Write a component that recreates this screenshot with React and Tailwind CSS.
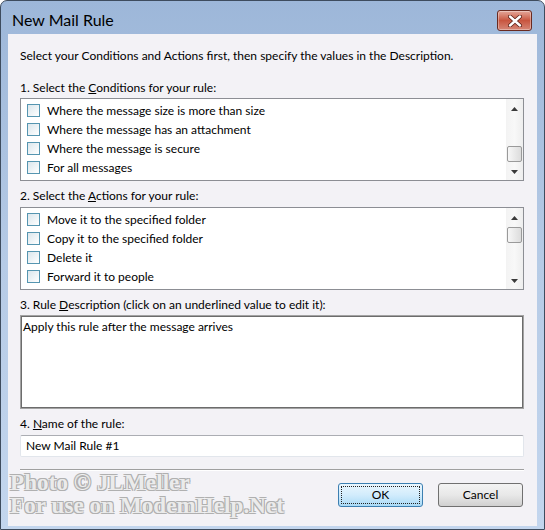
import React from "react";

function Check() {
  return (
    <span className="w-[13px] h-[13px] shrink-0 border border-[#5595b0] bg-linear-to-br from-[#dbe6ec] to-white" />
  );
}

function Arrow({ down }) {
  return (
    <svg width="7" height="4" viewBox="0 0 7 4">
      {down ? (
        <polygon points="0,0 7,0 3.5,4" fill="#3a3a3a" />
      ) : (
        <polygon points="0,4 7,4 3.5,0" fill="#3a3a3a" />
      )}
    </svg>
  );
}

function Scrollbar({ thumbTop }) {
  return (
    <div className="w-[17px] shrink-0 bg-linear-to-r from-[#f3f3f3] via-[#f8f8f8] to-[#eeeeee] flex flex-col items-center">
      <div className="h-[17px] w-full flex items-center justify-center pt-[2px]">
        <Arrow />
      </div>
      <div className="flex-1 w-full px-[1px]">
        <div
          className={
            "h-[16px] rounded-[2px] border border-[#9a9a9a] bg-linear-to-r from-[#f7f7f7] to-[#dcdcdc] " +
            (thumbTop ? "mt-[30px]" : "mt-[2px]")
          }
        />
      </div>
      <div className="h-[17px] w-full flex items-center justify-center">
        <Arrow down />
      </div>
    </div>
  );
}

function ListBox({ items, thumbTop }) {
  return (
    <div className="h-[83px] border border-[#8c8e94] bg-white flex">
      <div className="flex-1 flex flex-col pt-[2px]">
        {items.map((t) => (
          <div key={t} className="h-[19px] flex items-center pl-[6px] gap-[7px]">
            <Check />
            <span className="text-[12px] leading-[16px] text-black">{t}</span>
          </div>
        ))}
      </div>
      <Scrollbar thumbTop={thumbTop} />
    </div>
  );
}

export default function App() {
  return (
    <div className="w-[545px] h-[530px] flex flex-col rounded-t-[7px] border border-[#3e4c5e] bg-linear-to-b from-[#9db7d9] via-[#b6cbe6] to-[#c3d6ee] [font-family:Lato,'Noto_Sans',sans-serif] relative overflow-hidden">
      {/* Title bar */}
      <div className="h-[33px] shrink-0 flex items-start justify-between pl-[11px] pr-[12px]">
        <div className="mt-[9px] text-[16px] leading-[20px] text-black">New Mail Rule</div>
        <div className="mt-[9px] w-[35px] h-[21px] rounded-[3px] border border-[#6a2a20] bg-linear-to-b from-[#e3a699] via-[#c8553f] to-[#d58676] flex items-center justify-center shadow-[inset_0_0_0_1px_rgba(255,255,255,0.35)]">
          <svg width="14" height="12" viewBox="0 0 14 12">
            <path d="M2 1.5 L12 10.5 M12 1.5 L2 10.5" stroke="#5a1f16" strokeWidth="4" strokeLinecap="round" />
            <path d="M2 1.5 L12 10.5 M12 1.5 L2 10.5" stroke="#ffffff" strokeWidth="2.4" strokeLinecap="round" />
          </svg>
        </div>
      </div>

      {/* Client area */}
      <div className="flex-1 mx-[7px] mb-[3px] bg-[#f3f2f6] flex flex-col pl-[12px] pr-[13px] pt-[14px] text-[12px] leading-[16px] text-black">
        <div>Select your Conditions and Actions first, then specify the values in the Description.</div>

        <div className="mt-[16px] mb-[2px]">
          1. Select the <u>C</u>onditions for your rule:
        </div>
        <ListBox
          thumbTop
          items={[
            "Where the message size is more than size",
            "Where the message has an attachment",
            "Where the message is secure",
            "For all messages",
          ]}
        />

        <div className="mt-[7px] mb-[3px]">
          2. Select the <u>A</u>ctions for your rule:
        </div>
        <ListBox
          items={[
            "Move it to the specified folder",
            "Copy it to the specified folder",
            "Delete it",
            "Forward it to people",
          ]}
        />

        <div className="mt-[7px] mb-[2px]">
          3. Rule <u>D</u>escription (click on an underlined value to edit it):
        </div>
        <div className="h-[94px] border border-[#a3a3a3]">
          <div className="h-full border border-[#6c6c6c] bg-white pl-[1px] pt-[2px]">
            Apply this rule after the message arrives
          </div>
        </div>

        <div className="mt-[7px] mb-[3px]">
          4. <u>N</u>ame of the rule:
        </div>
        <div className="h-[22px] rounded-[2px] border border-[#e2e6ec] border-t-[#abadb3] bg-white flex items-center pl-[5px]">
          New Mail Rule #1
        </div>

        <div className="mt-[12px] h-[2px] border-t border-[#a0a0a0] border-b border-b-white" />

        <div className="mt-[12px] flex justify-end gap-[15px] pr-[1px]">
          <div className="w-[85px] h-[24px] rounded-[3px] border border-[#3c7fb1] bg-linear-to-b from-[#eaf6fd] via-[#d2ecfc] to-[#a9daf6] p-[2px]">
            <div className="w-full h-full border border-dotted border-[#222] flex items-center justify-center">
              OK
            </div>
          </div>
          <div className="w-[85px] h-[24px] rounded-[3px] border border-[#707070] bg-linear-to-b from-[#f3f3f3] via-[#e8e8e8] to-[#d0d0d0] flex items-center justify-center">
            Cancel
          </div>
        </div>
      </div>

      {/* Watermark overlay */}
      <div className="absolute left-[9px] top-[470px] [font-family:'Liberation_Serif',serif] font-bold text-[23px] leading-[23px] tracking-[0.1px] text-[#f4f4f4]/90 [text-shadow:1px_1px_0_#b0b0b0,-1px_-1px_0_#b0b0b0,1px_-1px_0_#b0b0b0,-1px_1px_0_#b0b0b0] pointer-events-none">
        <div>Photo © JLMeller</div>
        <div>For use on ModemHelp.Net</div>
      </div>
    </div>
  );
}
